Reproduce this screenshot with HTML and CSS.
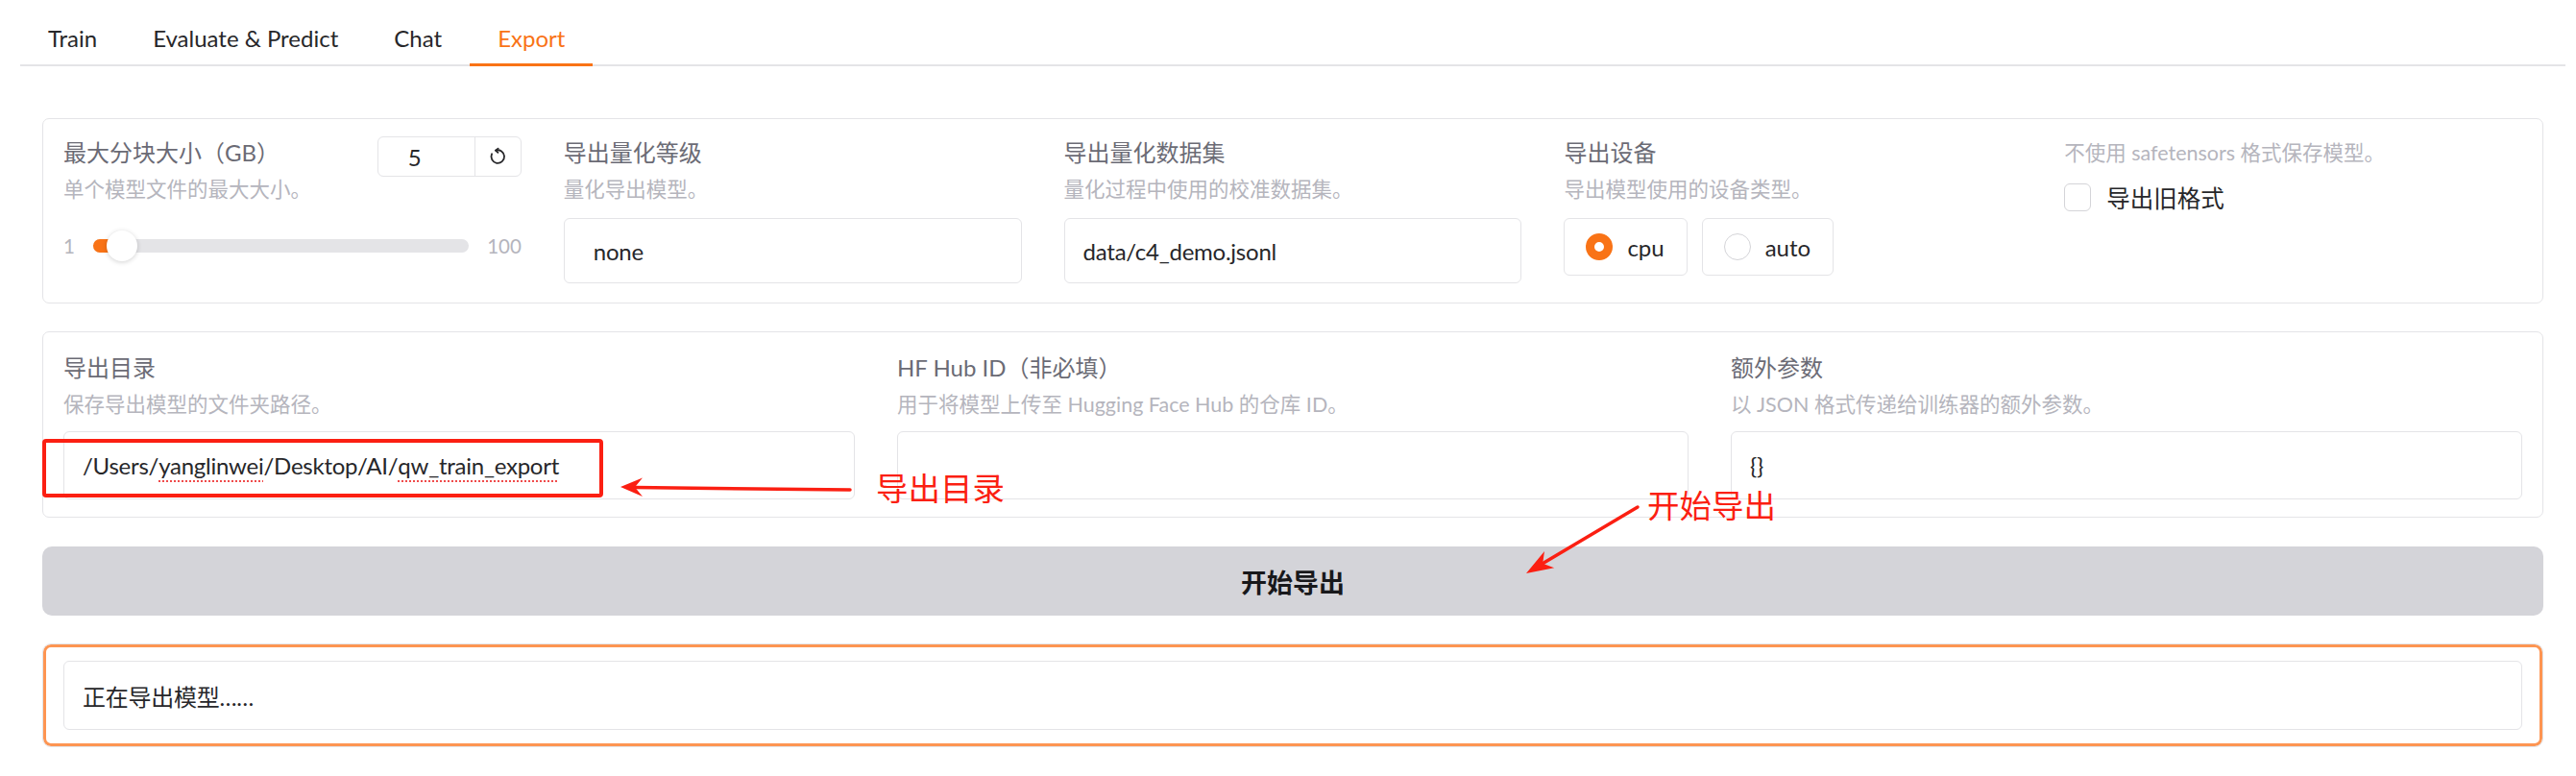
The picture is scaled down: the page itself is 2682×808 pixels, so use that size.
FILE: index.html
```html
<!DOCTYPE html>
<html lang="zh">
<head>
<meta charset="utf-8">
<title>Export</title>
<link rel="stylesheet" href="styles.css">
</head>
<body>
<div class="app">
  <div class="tablist">
    <div class="tab">Train</div>
    <div class="tab">Evaluate &amp; Predict</div>
    <div class="tab">Chat</div>
    <div class="tab selected">Export</div>
  </div>

  <div class="panel">
    <div class="card row5">
      <div class="col">
        <div class="slider-head">
          <div class="head-text">
            <div class="label">最大分块大小（GB）</div>
            <div class="desc">单个模型文件的最大大小。</div>
          </div>
          <div class="numbox">
            <div class="numval">5</div>
            <div class="numreset">
              <svg width="20" height="20" viewBox="0 0 20 20" fill="none" stroke="#27272a" stroke-width="1.8" stroke-linecap="round" stroke-linejoin="round">
                <path d="M8.2 3.6 A6.8 6.8 0 1 1 4.1 7.2"/>
                <path d="M10.6 1.6 L7.9 3.6 L10.4 5.8"/>
              </svg>
            </div>
          </div>
        </div>
        <div class="slider">
          <span class="smin">1</span>
          <div class="track">
            <div class="fill"></div>
            <div class="thumb"></div>
          </div>
          <span class="smax">100</span>
        </div>
      </div>

      <div class="col">
        <div class="label">导出量化等级</div>
        <div class="desc">量化导出模型。</div>
        <div class="input dropdown">none</div>
      </div>

      <div class="col">
        <div class="label">导出量化数据集</div>
        <div class="desc">量化过程中使用的校准数据集。</div>
        <div class="input">data/c4_demo.jsonl</div>
      </div>

      <div class="col">
        <div class="label">导出设备</div>
        <div class="desc">导出模型使用的设备类型。</div>
        <div class="radios">
          <div class="radio"><span class="dot checked"></span><span>cpu</span></div>
          <div class="radio"><span class="dot"></span><span>auto</span></div>
        </div>
      </div>

      <div class="col">
        <div class="desc top">不使用 safetensors 格式保存模型。</div>
        <div class="check-row">
          <span class="checkbox"></span>
          <span class="check-label">导出旧格式</span>
        </div>
      </div>
    </div>

    <div class="card row3">
      <div class="col">
        <div class="label">导出目录</div>
        <div class="desc">保存导出模型的文件夹路径。</div>
        <div class="input tall">/Users/<span class="spell">yanglinwei</span>/Desktop/AI/<span class="spell">qw_train_export</span></div>
      </div>
      <div class="col">
        <div class="label">HF Hub ID（非必填）</div>
        <div class="desc">用于将模型上传至 Hugging Face Hub 的仓库 ID。</div>
        <div class="input tall"></div>
      </div>
      <div class="col">
        <div class="label">额外参数</div>
        <div class="desc">以 JSON 格式传递给训练器的额外参数。</div>
        <div class="input tall">{}</div>
      </div>
    </div>

    <div class="button">开始导出</div>

    <div class="output">
      <div class="input outbox">正在导出模型……</div>
    </div>
  </div>
</div>

<div class="note note-dir">导出目录</div>
<div class="note note-start">开始导出</div>
<svg class="overlay" width="2682" height="808" viewBox="0 0 2682 808">
  <rect x="46" y="459" width="580" height="57" rx="2" fill="none" stroke="#fb1f12" stroke-width="4"/>
  <line x1="885" y1="510" x2="660" y2="507.5" stroke="#fb1f12" stroke-width="3.5" stroke-linecap="round"/>
  <polygon points="646,507 669,497.5 661,507.3 669,517" fill="#fb1f12"/>
  <line x1="1705" y1="528" x2="1604" y2="588" stroke="#fb1f12" stroke-width="3.5" stroke-linecap="round"/>
  <polygon points="1589,597 1608,574 1606.2,586.8 1618.2,591.3" fill="#fb1f12"/>
</svg>
</body>
</html>
```

FILE: styles.css
```css
* { box-sizing: border-box; }
html, body { margin: 0; padding: 0; background: #ffffff; }
body {
  position: relative;
  width: 2682px;
  height: 808px;
  overflow: hidden;
  font-family: Lato, "Noto Sans CJK SC", sans-serif;
  color: #27272a;
}
.app { padding-left: 21px; width: 2671px; }

.tablist {
  display: flex;
  border-bottom: 2px solid #e4e4e7;
}
.tab {
  font-size: 24px;
  line-height: 34px;
  padding: 23px 29px 9px;
  border-bottom: 3px solid transparent;
  margin-bottom: -2px;
  color: #27272a;
}
.tab.selected { color: #f97316; border-bottom-color: #f97316; }

.panel {
  padding: 54px 23px 0;
  display: flex;
  flex-direction: column;
  gap: 29px;
}

.card {
  border: 1px solid #e4e4e7;
  border-radius: 7px;
  display: grid;
  column-gap: 44px;
}
.row5 { grid-template-columns: repeat(5, 1fr); padding: 18px 21px 20px; }
.row3 { grid-template-columns: repeat(3, 1fr); padding: 20px 21px 18px; }

.col { display: flex; flex-direction: column; min-width: 0; }

.label { font-size: 24px; line-height: 34px; color: #6b6b75; white-space: nowrap; }
.desc { font-size: 21.5px; line-height: 30px; margin-top: 6px; color: #b5b5bd; white-space: nowrap; }
.desc.top { margin-top: 0; line-height: 34px; }

.input {
  margin-top: 15px;
  height: 68px;
  border: 1px solid #e4e4e7;
  border-radius: 6px;
  font-size: 24px;
  letter-spacing: -0.25px;
  display: flex;
  align-items: center;
  padding: 0 19px;
  color: #27272a;
  white-space: nowrap;
}
.input.dropdown { padding-left: 30px; }
.input.tall { margin-top: 13px; height: 71px; }
.spell {
  text-decoration: underline dotted #ef4b4b;
  text-decoration-thickness: 2px;
  text-underline-offset: 6px;
}

.slider-head { display: flex; justify-content: space-between; align-items: flex-start; height: 70px; }
.numbox {
  width: 150px;
  height: 42px;
  border: 1px solid #e4e4e7;
  border-radius: 6px;
  display: flex;
}
.numval { flex: 1; font-size: 24px; display: flex; align-items: center; padding-left: 31px; }
.numreset {
  width: 48px;
  border-left: 1px solid #e4e4e7;
  display: flex;
  align-items: center;
  justify-content: center;
}

.slider {
  margin-top: 28px;
  height: 32px;
  display: flex;
  align-items: center;
  gap: 19px;
  font-size: 20.5px;
  color: #b5b5bd;
}
.track {
  position: relative;
  flex: 1;
  height: 14px;
  border-radius: 7px;
  background: #e4e4e7;
}
.fill {
  width: 26px;
  height: 14px;
  border-radius: 7px;
  background: #f97316;
}
.thumb {
  position: absolute;
  left: 14px;
  top: -9px;
  width: 32px;
  height: 32px;
  border-radius: 50%;
  background: #ffffff;
  box-shadow: 0 1px 5px rgba(0, 0, 0, 0.18);
}

.radios { display: flex; gap: 15px; margin-top: 15px; }
.radio {
  height: 60px;
  border: 1px solid #e4e4e7;
  border-radius: 6px;
  display: flex;
  align-items: center;
  gap: 15px;
  padding: 0 23px 0 22px;
  font-size: 24px;
}
.dot {
  width: 28px;
  height: 28px;
  border-radius: 50%;
  border: 1px solid #d4d4d8;
  background: #fff;
}
.dot.checked {
  border: 9px solid #f97316;
  background: #ffffff;
}

.check-row { display: flex; align-items: center; gap: 16px; margin-top: 14px; height: 30px; }
.checkbox {
  width: 28px;
  height: 29px;
  border: 1px solid #d4d4d8;
  border-radius: 6px;
}
.check-label { font-size: 24.5px; color: #27272a; }

.button {
  height: 72px;
  margin-top: 1px;
  background: #d4d4d9;
  border-radius: 10px;
  display: flex;
  align-items: center;
  justify-content: center;
  font-size: 27px;
  font-weight: 700;
  color: #18181b;
}

.output {
  border: 1px solid #e4e4e7;
  border-radius: 9px;
  box-shadow: inset 0 0 0 3px #fd9552;
  padding: 17px 21px;
}
.input.outbox { margin-top: 0; height: 72px; }

.note {
  position: absolute;
  font-size: 33.5px;
  line-height: 40px;
  color: #fb1f12;
  font-family: "Noto Sans CJK SC", sans-serif;
}
.note-dir { left: 912px; top: 487px; }
.note-start { left: 1715px; top: 505px; }
.overlay { position: absolute; left: 0; top: 0; pointer-events: none; }
```
